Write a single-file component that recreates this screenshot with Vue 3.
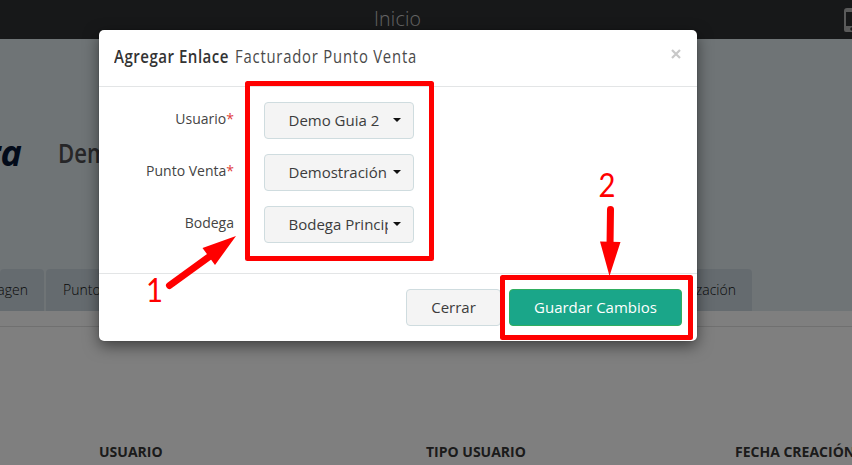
<script setup>
import { ref } from 'vue'

const fields = ref([
  { label: 'Usuario', required: true, value: 'Demo Guia 2' },
  { label: 'Punto Venta', required: true, value: 'Demostración' },
  { label: 'Bodega', required: false, value: 'Bodega Principal' },
])

const columns = ['USUARIO', 'TIPO USUARIO', 'FECHA CREACIÓN']
</script>

<template>
  <div class="app">
    <header class="topbar">
      <span class="topbar-title">Inicio</span>
      <svg class="device" width="16" height="24" viewBox="0 0 16 24">
        <path fill-rule="evenodd" fill="#b4b4b4" d="M3 0h10a3 3 0 0 1 3 3v18a3 3 0 0 1-3 3H2a2 2 0 0 1-2-2V3a3 3 0 0 1 3-3zM2 4v14h12V4zM8 19.2a1.8 1.8 0 1 0 0 3.6 1.8 1.8 0 0 0 0-3.6z" />
      </svg>
    </header>

    <section class="hero">
      <div class="brand">
        <span class="logo"><span>ra</span></span>
        <svg class="company" width="42" height="34">
          <text x="0" y="27" textLength="50" lengthAdjust="spacingAndGlyphs">Dem</text>
        </svg>
      </div>
      <nav class="tabs">
        <span class="tab tab-first"><span>Imagen</span></span>
        <span class="tab tab-mid">Punto Venta</span>
        <span class="tab tab-last">Autorización</span>
      </nav>
    </section>

    <main class="content">
      <div class="table-head">
        <span v-for="c in columns" :key="c">{{ c }}</span>
      </div>
    </main>

    <div class="backdrop">
      <div class="modal" role="dialog">
        <div class="modal-header">
          <svg class="modal-title" width="310" height="30">
            <text class="strong" x="0" y="21" textLength="115" lengthAdjust="spacingAndGlyphs">Agregar Enlace</text>
            <text x="121" y="21" textLength="182" lengthAdjust="spacingAndGlyphs">Facturador Punto Venta</text>
          </svg>
          <svg class="close" width="10" height="10" viewBox="0 0 10 10">
            <path d="M1 1l8 8M9 1L1 9" stroke="#c8c8c8" stroke-width="2.2" />
          </svg>
        </div>

        <div class="modal-body">
          <div v-for="f in fields" :key="f.label" class="row">
            <label>{{ f.label }}<i v-if="f.required">*</i></label>
            <div class="select">
              <span class="select-value">{{ f.value }}</span>
              <span class="caret"></span>
            </div>
          </div>
        </div>

        <div class="modal-footer">
          <button class="btn">Cerrar</button>
          <button class="btn btn-primary">Guardar Cambios</button>
        </div>
      </div>
    </div>

    <!-- guide marks -->
    <svg class="marks" width="852" height="465" viewBox="0 0 852 465">
      <g fill="none" stroke="#f00" stroke-width="5" stroke-linejoin="round">
        <rect x="247.5" y="83.5" width="184" height="175" />
        <rect x="502.5" y="277.5" width="188" height="60" />
      </g>
      <g stroke="#f00" stroke-width="7" stroke-linecap="round">
        <path d="M169.500 285.500L213 254" />
        <path d="M610.500 209.500L610 246" />
      </g>
      <path fill="#f00" d="M236 236L202.500 248L215 265zM609.500 276L600 241.500L620.500 242z" />
      <text x="146" y="302" textLength="17" lengthAdjust="spacingAndGlyphs">1</text>
      <text x="598.500" y="197" textLength="17" lengthAdjust="spacingAndGlyphs">2</text>
    </svg>
  </div>
</template>

<style>
body { margin: 0; overflow: hidden; }
</style>

<style scoped>
.app {
  position: relative; width: 852px; height: 465px; overflow: hidden;
  display: flex; flex-direction: column; background: #fff;
  font-family: 'Open Sans', 'Noto Sans', sans-serif; color: #333;
}

.topbar {
  position: relative; height: 39px; flex-shrink: 0; box-sizing: border-box;
  background: #2f3133; padding-left: 374px;
}
.topbar-title { display: block; font-size: 19.5px; line-height: 37px; font-weight: 350; color: #c8c8c8; letter-spacing: 0.2px; }
.device { position: absolute; left: 844px; top: 8px; }

.hero {
  height: 272px; flex-shrink: 0; background: #dfe8ed;
  display: flex; flex-direction: column; justify-content: space-between;
}
.brand { display: flex; padding-top: 96px; align-items: center; height: 36px; }
.logo { width: 22px; display: flex; justify-content: flex-end; overflow: hidden; flex-shrink: 0; }
.logo span { font-size: 36px; line-height: 44px; font-weight: 700; font-style: italic; color: #061634; }
.company { margin-left: 36px; }
.company text { font-size: 26.5px; font-weight: 600; fill: #4c4c50; }

.tabs { display: flex; height: 42px; position: relative; }
.tab {
  background: #cbd7df; border-radius: 4px 4px 0 0; box-sizing: border-box;
  font-size: 14px; line-height: 42px; color: #111; font-weight: 350; white-space: nowrap;
}
.tab-first { width: 44px; display: flex; justify-content: flex-end; padding-right: 16px; overflow: hidden; }
.tab-mid { width: 200px; margin-left: 2px; padding-left: 17px; }
.tab-last { width: 250px; margin-left: 256px; padding-right: 16px; text-align: right; }

.content { flex: 1; border-top: 1px solid #e0e0e0; margin-top: 15px; }
.table-head {
  display: grid; grid-template-columns: 327px 309px 1fr; padding: 115px 0 0 99px;
  font-size: 14px; line-height: 19px; font-weight: 700; color: #363636; white-space: nowrap;
}

.backdrop {
  position: absolute; inset: 0; background: rgba(0, 0, 0, 0.5);
  padding: 30px 0 0 99px; box-sizing: border-box;
}
.modal {
  width: 598px; height: 311px; background: #fff; border-radius: 5px;
  box-shadow: 0 5px 15px rgba(0, 0, 0, 0.5), 0 0 1px rgba(0, 0, 0, 0.5);
  display: flex; flex-direction: column;
}
.modal-header {
  height: 57px; box-sizing: border-box; border-bottom: 1px solid #e3e5e6;
  display: flex; justify-content: space-between; padding: 12px 16px 0 15px;
}
.modal-title text { font-size: 18.5px; font-weight: 400; fill: #4a4a4a; letter-spacing: 1px; }
.modal-title .strong { font-weight: 600; fill: #333; letter-spacing: 0.6px; }
.close { margin-top: 7px; }

.modal-body { flex: 1; padding-top: 15px; display: flex; flex-direction: column; gap: 15px; }
.row { display: flex; height: 37px; }
.row label {
  width: 135px; text-align: right; margin-right: 30px;
  font-size: 14px; line-height: 33px; color: #444;
}
.row i { font-style: normal; color: #e0403a; }
.select {
  width: 150px; box-sizing: border-box; border: 1px solid #cfdcdf; border-radius: 4px;
  background: #f4f4f4; display: flex; align-items: center; padding: 0 12px 0 23.5px;
}
.select-value {
  flex: 1; overflow: hidden; white-space: nowrap; font-size: 15px; line-height: 35px; color: #3c3c3c;
  margin-right: 5px;
}
.caret { border: 4px solid transparent; border-top-color: #111; border-bottom: 0; margin-bottom: 1px; }

.modal-footer {
  height: 68px; box-sizing: border-box; border-top: 1px solid #e3e5e6;
  display: flex; justify-content: flex-end; gap: 8px; padding: 15px 15px 0 0;
}
.btn {
  width: 95px; height: 37px; border: 1px solid #cfdcdf; border-radius: 4px; background: #f4f4f4;
  font: 400 15px 'Open Sans', sans-serif; color: #3c3c3c; padding: 0 0 2px;
}
.btn-primary { width: 173px; background: #1aa689; border-color: #2fae60; color: #fff; }

.marks { position: absolute; left: 0; top: 0; }
.marks text { font: 400 32px Lato, sans-serif; fill: #f00; }
</style>
